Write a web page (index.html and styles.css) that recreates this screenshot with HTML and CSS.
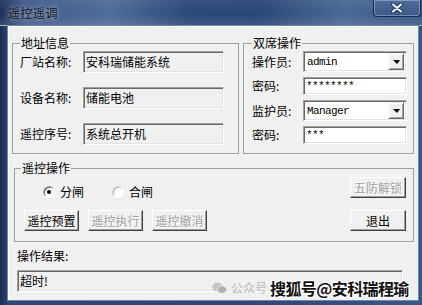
FILE: index.html
```html
<!DOCTYPE html>
<html lang="zh-CN">
<head>
    <meta charset="UTF-8">
    <meta name="viewport" content="width=device-width, initial-scale=1.0">
    <title>遥控遥调</title>
    <link rel="stylesheet" href="styles.css">
</head>
<body>
    <div class="window">
        <div class="titlebar">
            <span class="title">遥控遥调</span>
            <div class="close">
                <svg width="12" height="10" viewBox="0 0 12 10">
                    <path d="M2 1.5 L10 8.5 M10 1.5 L2 8.5" stroke="#26385a" stroke-width="4" stroke-linecap="round"/>
                    <path d="M2 1.5 L10 8.5 M10 1.5 L2 8.5" stroke="#f4f6fa" stroke-width="2" stroke-linecap="round"/>
                </svg>
            </div>
        </div>

        <div class="client">
            <div class="top-row">
                <fieldset class="group addr">
                    <legend>地址信息</legend>
                    <div class="fields">
                        <label>厂站名称:</label>
                        <div class="edit">安科瑞储能系统</div>
                        <label>设备名称:</label>
                        <div class="edit">储能电池</div>
                        <label>遥控序号:</label>
                        <div class="edit">系统总开机</div>
                    </div>
                </fieldset>

                <fieldset class="group dual">
                    <legend>双席操作</legend>
                    <div class="fields">
                        <label>操作员:</label>
                        <div class="combo"><span class="mono">admin</span><span class="drop"></span></div>
                        <label>密码:</label>
                        <div class="pass mono">********</div>
                        <label>监护员:</label>
                        <div class="combo"><span class="mono">Manager</span><span class="drop"></span></div>
                        <label>密码:</label>
                        <div class="pass mono">***</div>
                    </div>
                </fieldset>
            </div>

            <fieldset class="group ctl">
                <legend>遥控操作</legend>
                <div class="ctl-body">
                    <div class="ctl-left">
                        <div class="radios">
                            <div class="opt"><span class="radio checked"></span>分闸</div>
                            <div class="opt"><span class="radio light"></span>合闸</div>
                        </div>
                        <div class="btns">
                            <div class="btn">遥控预置</div>
                            <div class="btn disabled">遥控执行</div>
                            <div class="btn disabled">遥控撤消</div>
                        </div>
                    </div>
                    <div class="ctl-right">
                        <div class="btn disabled">五防解锁</div>
                        <div class="btn">退出</div>
                    </div>
                </div>
            </fieldset>

            <div class="result-label">操作结果:</div>
            <div class="edit result">超时!</div>
        </div>

        <div class="watermark">
            <svg class="wx" width="15" height="12" viewBox="0 0 15 12">
                <ellipse cx="5.5" cy="5" rx="5.3" ry="4.4" fill="#c4c4c4"/>
                <ellipse cx="10" cy="7.6" rx="4.6" ry="3.8" fill="#b0b0b0" stroke="#f0f0f0" stroke-width="0.8"/>
            </svg>
            <span class="wm-gz">公众号</span>
            <span class="wm-sohu">搜狐号@安科瑞程瑜</span>
        </div>
    </div>
</body>
</html>
```

FILE: styles.css
```css
body {
    margin: 0;
    font-family: "Noto Sans CJK SC", "Noto Sans", sans-serif;
    font-size: 12px;
    color: #000;
}
.window {
    position: relative;
    width: 422px;
    height: 305px;
    display: flex;
    flex-direction: column;
    overflow: hidden;
    background: linear-gradient(90deg, #1a2d52 0px, #2b4574 8px, #2d4877 60%, #3a5686 100%);
}
.titlebar {
    height: 25px;
    display: flex;
    justify-content: space-between;
    align-items: flex-start;
    border-bottom: 1px solid #9fb2d0;
    background:
        linear-gradient(180deg, rgba(255,255,255,0.06), rgba(255,255,255,0) 55%, rgba(255,255,255,0.1)),
        linear-gradient(90deg, #1d3157 0px, #3e5988 24px, #4f6b99 110px, #2b4778 190px, #2a4677 260px, #4a6795 345px, #3b5787 422px);
}
.title {
    margin: 5px 0 0 8px;
    line-height: 16px;
    letter-spacing: 0.5px;
    color: #161616;
    text-shadow: 0 0 5px rgba(225, 232, 245, 0.9);
}
.close {
    width: 48px;
    height: 17px;
    margin-right: 1px;
    box-sizing: border-box;
    display: flex;
    align-items: center;
    justify-content: center;
    border: 1px solid #1b2a48;
    border-top: none;
    border-radius: 0 0 4px 4px;
    box-shadow: inset 0 0 0 1px rgba(255, 255, 255, 0.3);
    background: linear-gradient(180deg, #4f6c9b, #3c5888);
}
.client {
    flex: 1;
    margin: 0 4px 5px 8px;
    border-top: 1px solid #fff;
    border-left: 1px solid #fff;
    box-shadow: 0 0 0 1px #6e87b1;
    background: #f0f0f0;
    padding-top: 9px;
}
.top-row {
    display: flex;
    gap: 4px;
    margin: 0 4px 0 3px;
}
.group {
    margin: 0;
    padding: 0;
    min-width: 0;
    border: 1px solid #a0a0a0;
}
.group legend {
    padding: 0 1px;
    line-height: 14px;
}
.addr {
    width: 227px;
    box-sizing: border-box;
    padding: 0 14px 0 7px;
}
.addr .fields {
    display: grid;
    grid-template-columns: 63px 141px;
    grid-template-rows: 22px 22px 22px;
    row-gap: 14px;
    align-items: center;
    padding: 1px 0 8px;
}
.dual {
    flex: 1;
    padding: 0 6px 0 8px;
}
.dual .fields {
    display: grid;
    grid-template-columns: 51px 104px;
    grid-template-rows: 21px 18px 21px 18px;
    row-gap: 5px;
    align-items: center;
    padding-top: 1px;
}
label {
    line-height: 14px;
    white-space: nowrap;
}
.edit,
.pass,
.combo {
    box-sizing: border-box;
    border: 1px solid;
    border-color: #a0a0a0 #fff #fff #a0a0a0;
    box-shadow: inset 1px 1px #696969, inset -1px -1px #e3e3e3;
    white-space: nowrap;
    overflow: hidden;
}
.edit {
    height: 22px;
    line-height: 20px;
    padding-left: 2px;
    background: #f0f0f0;
}
.pass {
    height: 18px;
    line-height: 16px;
    padding-left: 2px;
    background: #fff;
}
.combo {
    height: 21px;
    display: flex;
    align-items: center;
    justify-content: space-between;
    padding: 0 2px 0 3px;
    background: #fff;
}
.mono {
    font-family: "Liberation Mono", monospace;
    font-size: 11px;
    letter-spacing: -0.6px;
}
.drop {
    width: 16px;
    height: 17px;
    box-sizing: border-box;
    display: flex;
    align-items: center;
    justify-content: center;
    background: #f0f0f0;
    border: 1px solid;
    border-color: #f0f0f0 #696969 #696969 #f0f0f0;
    box-shadow: inset 1px 1px #fff, inset -1px -1px #a0a0a0;
}
.drop::after {
    content: "";
    border-left: 4px solid transparent;
    border-right: 3px solid transparent;
    border-top: 4px solid #000;
}
.ctl {
    margin: 7px 4px 0 5px;
}
.ctl legend {
    margin-left: 6px;
}
.ctl-body {
    display: flex;
    justify-content: space-between;
    align-items: flex-start;
}
.ctl-left {
    padding: 10px 0 10px 9px;
}
.radios {
    display: flex;
    align-items: center;
    height: 14px;
    margin-left: 19px;
}
.opt {
    display: flex;
    align-items: center;
    gap: 5px;
    line-height: 14px;
}
.opt + .opt {
    margin-left: 28px;
}
.radio {
    position: relative;
    width: 12px;
    height: 12px;
    box-sizing: border-box;
    border-radius: 50%;
    border: 1px solid;
    border-color: #a0a0a0 #fff #fff #a0a0a0;
    box-shadow: inset 1px 1px #696969;
    background: #fff;
}
.radio.light {
    border-color: #d0d0d0 #fff #fff #d0d0d0;
    box-shadow: inset 1px 1px #b8b8b8;
}
.radio.checked::after {
    content: "";
    position: absolute;
    left: 3px;
    top: 3px;
    width: 4px;
    height: 4px;
    border-radius: 50%;
    background: #000;
}
.btns {
    display: flex;
    gap: 9px;
    margin-top: 11px;
}
.btn {
    width: 55px;
    height: 21px;
    box-sizing: border-box;
    text-align: center;
    line-height: 19px;
    background: #f0f0f0;
    border: 1px solid;
    border-color: #fff #404040 #404040 #fff;
    box-shadow: inset -1px -1px #a0a0a0;
}
.btn.disabled {
    color: #a0a0a0;
    text-shadow: 1px 1px #fff;
}
.ctl-right {
    display: flex;
    flex-direction: column;
    gap: 12px;
    padding-top: 2px;
    margin-right: 7px;
}
.ctl-right .btn {
    width: 56px;
}
.result-label {
    margin: 7px 0 0 8px;
    line-height: 14px;
}
.result {
    width: 386px;
    margin: 7px 0 0 8px;
}
.watermark {
    position: absolute;
    left: 212px;
    top: 277px;
    display: flex;
    align-items: center;
    height: 21px;
}
.wx {
    margin-right: 4px;
}
.wm-gz {
    color: #b8b8b8;
    font-size: 12px;
    white-space: nowrap;
}
.wm-sohu {
    margin-left: 3px;
    font-size: 16px;
    font-weight: 700;
    letter-spacing: -0.6px;
    color: #111;
    text-shadow: 1px 0 #fff, -1px 0 #fff, 0 1px #fff, 0 -1px #fff,
        1px 1px #fff, -1px -1px #fff, 1px -1px #fff, -1px 1px #fff;
}
```
